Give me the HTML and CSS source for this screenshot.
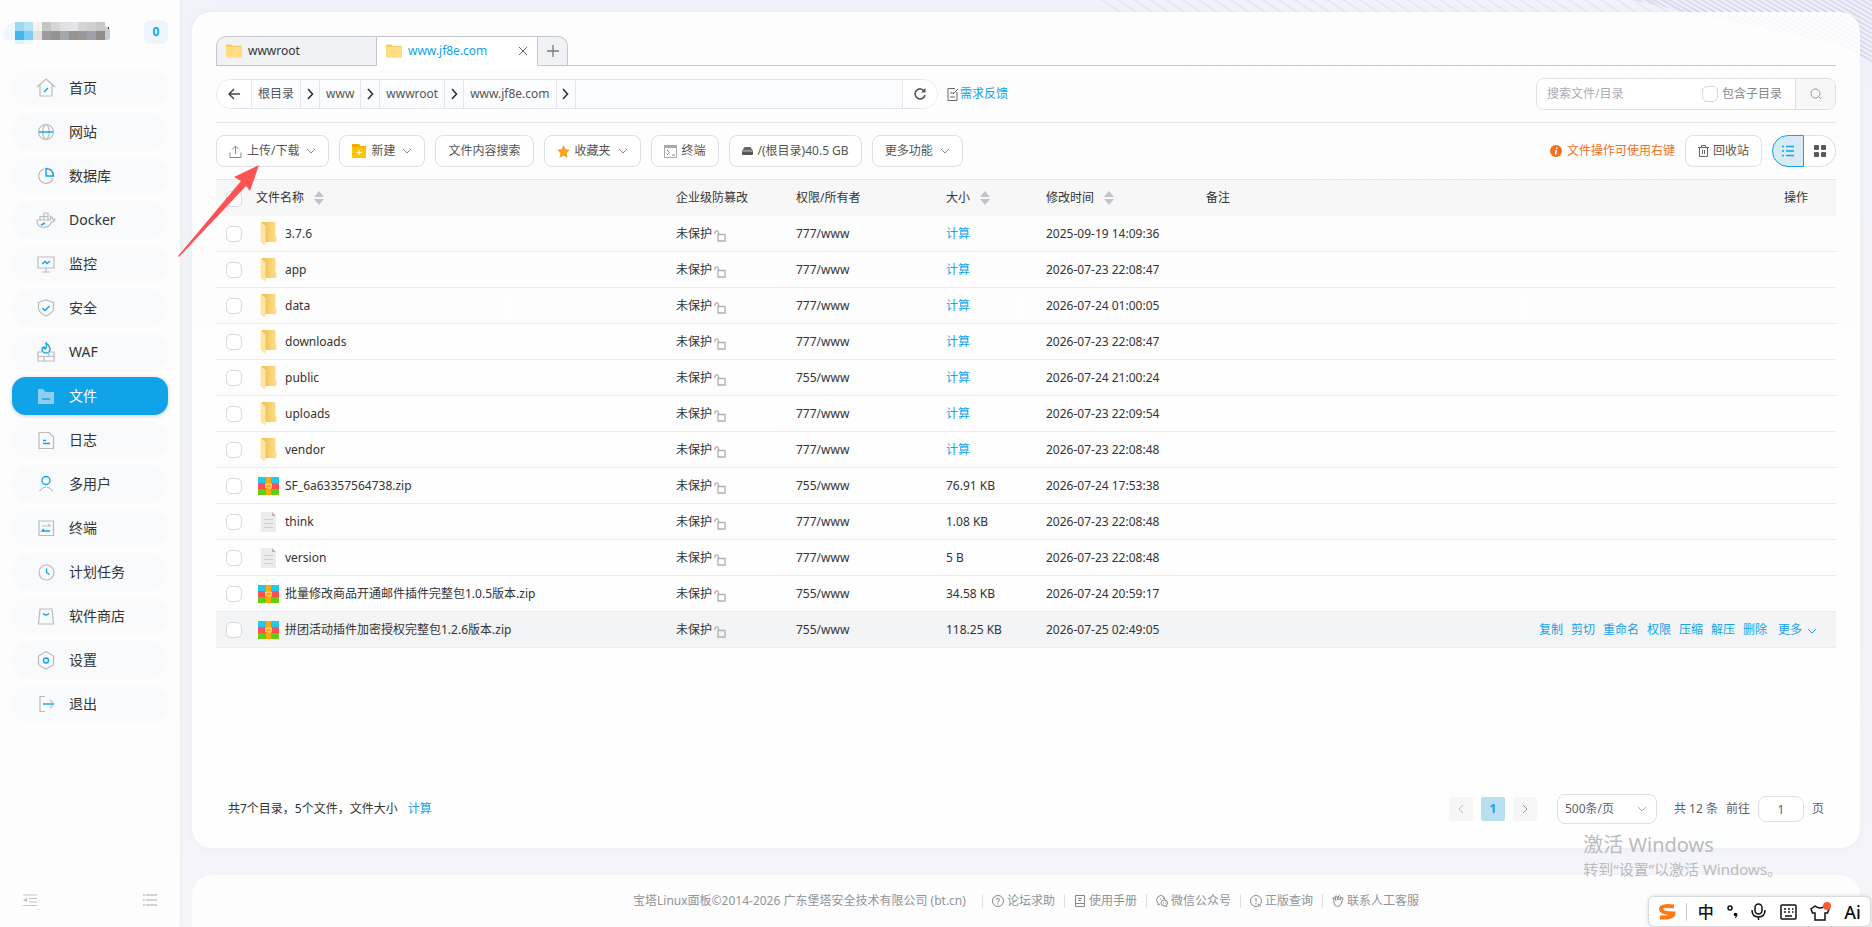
FILE: index.html
```html
<!DOCTYPE html>
<html lang="zh-CN">
<head>
    <meta charset="UTF-8">
    <meta name="viewport" content="width=device-width, initial-scale=1.0">
    <title>文件 - 宝塔Linux面板</title>
    <link rel="stylesheet" href="styles.css">
</head>
<body>
    <!-- 图标 -->
    <svg class="sprite" aria-hidden="true">
        <linearGradient id="gold" x1="0" x2="1" y1="0" y2="0">
            <stop offset="0" stop-color="#e9bd50"/><stop offset="1" stop-color="#ffe08a"/>
        </linearGradient>
        <symbol id="folder" viewBox="0 0 18 24">
            <path d="M2 0h14v14l1 1v5H5z" fill="url(#gold)"/>
            <path d="M1 0l5 4v20l-4-3-1-1z" fill="#ffe6a0"/>
        </symbol>
        <symbol id="folder-sm" viewBox="0 0 16 14">
            <path d="M0 1.5Q0 .5 1 .5h4l1.5 1.2H15q1 0 1 1V13H0z" fill="#f5c95c"/>
            <rect y="2.8" width="16" height="11" rx="1" fill="#ffdd80"/>
        </symbol>
        <symbol id="zip" viewBox="0 0 21 18">
            <rect width="21" height="18" rx="1" fill="#ff4f55"/>
            <path d="M0 1q0-1 1-1h19q1 0 1 1v5H0z" fill="#23c8f0"/>
            <path d="M0 12h21v5q0 1-1 1H1q-1 0-1-1z" fill="#5fd00a"/>
            <path d="M8 0h5v18H8z" fill="#ffa90a"/>
            <rect x="7.7" y="7.2" width="5.6" height="3.6" fill="none" stroke="#ffd27a" stroke-width="1.2"/>
        </symbol>
        <symbol id="doc" viewBox="0 0 15 20">
            <path d="M0 0h11l4 4v16H0z" fill="#ececec"/>
            <path d="M11 0l4 4h-4z" fill="#b5b5b5"/>
            <path d="M3 7.5h9M3 11.5h9M3 15.5h9" stroke="#cfcfcf"/>
        </symbol>
        <symbol id="lock" viewBox="0 0 12 12">
            <path d="M4.5 4.5h6.5v6.5h-7V4.5z M1 4V2.5Q1 1 2.8 1T4.5 2.5v2" fill="none" stroke="#b0b0b0" stroke-width="1.3"/>
        </symbol>
        <symbol id="down" viewBox="0 0 10 6">
            <path d="M1 1l4 4 4-4" fill="none" stroke="currentColor"/>
        </symbol>
        <symbol id="next" viewBox="0 0 7 12">
            <path d="M1 1l4.5 5L1 11" fill="none" stroke="currentColor" stroke-width="1.6"/>
        </symbol>
        <symbol id="sort" viewBox="0 0 10 14">
            <path d="M5 0l5 6H0zM5 14l5-6H0z" fill="#c0c4cc"/>
        </symbol>
    </svg>

    <!-- 背景斜线 -->
    <svg class="bg-lines" viewBox="0 0 800 200" aria-hidden="true">
        <defs>
            <pattern id="stripe" width="9" height="9" patternUnits="userSpaceOnUse" patternTransform="rotate(34)">
                <path d="M0 1h9" stroke="#c9cbe2" stroke-width="1"/>
            </pattern>
            <pattern id="stripe2" width="4" height="4" patternUnits="userSpaceOnUse" patternTransform="rotate(30)">
                <path d="M0 1h4" stroke="#c3bfe4" stroke-width="1"/>
            </pattern>
        </defs>
        <path d="M20 0h580l150 90-110 110H260z" fill="url(#stripe)" opacity=".5"/>
        <path d="M560 0h240v64l-30-18z" fill="url(#stripe2)"/>
    </svg>

    <div class="layout">
        <aside class="sidebar">
            <div class="brand">
                <svg width="108" height="26" viewBox="0 0 108 26" aria-hidden="true">
                    <path d="M0 16Q0 6 12 3h5v18H5q-5 0-5-5z" fill="#edf8fd"/>
                    <path d="M12 3h9v9h-9z" fill="#9bd8f5"/><path d="M21 3h9v9h-9z" fill="#b5e4f8"/>
                    <path d="M30 3h9v9h-9z" fill="#f5f1ef"/><path d="M39 3h9v9h-9z" fill="#c5c5c6"/>
                    <path d="M48 3h9v9h-9z" fill="#d6d6d8"/><path d="M57 3h9v9h-9z" fill="#dfe2e5"/>
                    <path d="M66 3h9v9h-9z" fill="#e5e5e7"/><path d="M75 3h9v9h-9z" fill="#d5d3d6"/>
                    <path d="M84 3h9v9h-9z" fill="#cfced1"/><path d="M93 3h9v9h-9z" fill="#c8c6c8"/>
                    <path d="M12 12h9v9h-9z" fill="#42b5eb"/><path d="M21 12h9v9h-9z" fill="#7bcdf2"/>
                    <path d="M30 12h9v9h-9z" fill="#e7e0dd"/><path d="M39 12h9v9h-9z" fill="#9c9a9b"/>
                    <path d="M48 12h9v9h-9z" fill="#959292"/><path d="M57 12h9v9h-9z" fill="#a3a8ad"/>
                    <path d="M66 12h9v9h-9z" fill="#989291"/><path d="M75 12h9v9h-9z" fill="#9b9899"/>
                    <path d="M84 12h9v9h-9z" fill="#9fa1a8"/><path d="M93 12h9v9h-9z" fill="#928d8a"/>
                    <path d="M102 7q5 1 5 5v7q0 2-5 2z" fill="#c9ccd3"/>
                    <path d="M12 21h9v4h-9z" fill="#ddf2fb"/><path d="M21 21h9v4h-9z" fill="#f0fafd"/>
                    <path d="M105 8h1v2h-1z" fill="#333"/>
                </svg>
                <span class="msg-count">0</span>
            </div>
            <nav class="menu">
                <a href="#"><svg viewBox="0 0 20 20"><path d="M1 9l9-8 9 8M4 7v11h12V7"/><path class="hl" d="M8 14l4-4"/></svg>首页</a>
                <a href="#"><svg viewBox="0 0 20 20"><circle cx="10" cy="10" r="7.5"/><ellipse cx="10" cy="10" rx="3.2" ry="7.5"/><path class="hl" d="M3 10h14"/></svg>网站</a>
                <a href="#"><svg viewBox="0 0 20 20"><path d="M8 3a7.3 7.3 0 1 0 9 9"/><path class="hl" d="M10 2.5V10h7.5Q17 3 10 2.5z"/></svg>数据库</a>
                <a href="#"><svg viewBox="0 0 20 20"><path d="M1 10h13q1-1 .5-4 2 1 2 3 1.500-.2 2.500.5Q18 12 15.500 12 13 17.500 8 17.500 1 17.500 1 10zM4 10V6.500h8V10M8 10V3h4v4M8 6v4"/><path class="hl" d="M5 15l4-2"/></svg>Docker</a>
                <a href="#"><svg viewBox="0 0 20 20"><path d="M2 3h16v11H2zM10 14v3.500M6 18h8"/><path class="hl" d="M6 10l3-2.500 2 2 3-2.500"/></svg>监控</a>
                <a href="#"><svg viewBox="0 0 20 20"><path d="M10 2l7.500 2.500v6Q17 15 10 18 3 15 2.500 10.500v-6z"/><path class="hl" d="M6.500 10l2.500 2.500 4.500-4.500"/></svg>安全</a>
                <a href="#"><svg viewBox="0 0 20 20"><path d="M6 10H2v9h16v-9h-4M2 14.500h16M8 14.500V19M13 11v3.500"/><path class="hl" d="M10 1q4 3 4 6.500Q13.500 11 10 11T6 7.500Q6.500 5 8 5q0 2 1.500 2Q11 4 10 1z"/></svg>WAF</a>
                <a href="#" class="active"><svg viewBox="0 0 20 20"><path class="fill" d="M2 3h5l2.500 3H18v12H2z"/><path class="hl" d="M6 13h8"/></svg>文件</a>
                <a href="#"><svg viewBox="0 0 20 20"><path d="M3 2.500h10L17.500 7v11.500H3z"/><path class="hl" d="M7 10.500h3M7 13.500h7"/></svg>日志</a>
                <a href="#"><svg viewBox="0 0 20 20"><path d="M3.500 17q6.500-8 13 0"/><circle class="hl" cx="10" cy="6.500" r="4"/></svg>多用户</a>
                <a href="#"><svg viewBox="0 0 20 20"><path d="M3 3h14.500v14.500H3zM6 8h8l-2-2"/><path class="hl" d="M14 13H6l2-2"/></svg>终端</a>
                <a href="#"><svg viewBox="0 0 20 20"><circle cx="10.500" cy="10.500" r="7.500"/><path class="hl" d="M10.500 6.500v4l3 2"/></svg>计划任务</a>
                <a href="#"><svg viewBox="0 0 20 20"><path d="M4 3h12l1.500 15h-15z"/><path class="hl" d="M7 7.500q3 3 6 0"/></svg>软件商店</a>
                <a href="#"><svg viewBox="0 0 20 20"><path d="M10 1.500l7.500 4.500v9L10 19l-7.500-4V6z"/><circle class="hl" cx="10" cy="10.500" r="2.500"/></svg>设置</a>
                <a href="#"><svg viewBox="0 0 20 20"><path d="M9 2.500H4v15h5M14 6l4 4-4 4"/><path class="hl" d="M7 10h10"/></svg>退出</a>
            </nav>
            <div class="sidebar-foot">
                <button aria-label="收起菜单"><svg width="14" height="12" viewBox="0 0 14 12"><path d="M0 1h14M6 4.500h8M6 8h8M0 11.500h14" stroke="#c4c4c4"/><path d="M4 3.500v5L0 6z" fill="#c4c4c4"/></svg></button>
                <button aria-label="菜单设置"><svg width="14" height="12" viewBox="0 0 14 12"><path d="M0 1h2M3 1h11M0 6h2M3 6h11M0 11h2M3 11h11" stroke="#c4c4c4" stroke-width="1.5"/></svg></button>
            </div>
        </aside>

        <div class="content">
            <main class="panel">
                <div class="tabs">
                    <button class="tab"><svg width="16" height="14"><use href="#folder-sm"/></svg>wwwroot</button>
                    <button class="tab current"><svg width="16" height="14"><use href="#folder-sm"/></svg>www.jf8e.com
                        <svg class="close" width="10" height="10" viewBox="0 0 10 10"><path d="M1 1l8 8M9 1L1 9" stroke="#666"/></svg></button>
                    <button class="tab-add" aria-label="新建标签"><svg width="12" height="12" viewBox="0 0 12 12"><path d="M6 0v12M0 6h12" stroke="#777" stroke-width="1.3"/></svg></button>
                </div>

                <div class="path-row">
                    <div class="path">
                        <button class="path-btn" aria-label="返回"><svg width="12" height="12" viewBox="0 0 12 12"><path d="M12 6H1M6 1L1 6l5 5" fill="none" stroke="#444" stroke-width="1.5"/></svg></button>
                        <a href="#">根目录</a><span class="sep"><svg width="7" height="12"><use href="#next"/></svg></span>
                        <a href="#">www</a><span class="sep"><svg width="7" height="12"><use href="#next"/></svg></span>
                        <a href="#">wwwroot</a><span class="sep"><svg width="7" height="12"><use href="#next"/></svg></span>
                        <a href="#">www.jf8e.com</a><span class="sep"><svg width="7" height="12"><use href="#next"/></svg></span>
                        <button class="path-btn refresh" aria-label="刷新"><svg width="12" height="12" viewBox="0 0 12 12"><path d="M10.500 3.500A5 5 0 1 0 11 7" fill="none" stroke="#555" stroke-width="1.6"/><path d="M11.500 0v4.500H7z" fill="#555"/></svg></button>
                    </div>
                    <a href="#" class="feedback"><svg width="12" height="13" viewBox="0 0 12 13"><path d="M8 .5H1v12h9V4M3 5h4M3 9h5M6 6l5-5" fill="none" stroke="#666"/></svg>需求反馈</a>
                    <form class="search">
                        <input type="text" placeholder="搜索文件/目录" aria-label="搜索文件/目录">
                        <label><input type="checkbox">包含子目录</label>
                        <button type="button" aria-label="搜索"><svg width="12" height="12" viewBox="0 0 12 12"><circle cx="5.5" cy="5.5" r="4.5" fill="none" stroke="#999"/><path d="M8.500 8.500l2.500 2.500" stroke="#999"/></svg></button>
                    </form>
                </div>

                <div class="toolbar">
                    <button class="btn"><svg width="13" height="13" viewBox="0 0 13 13"><path d="M6.500 9V1M3 4.500L6.500 1 10 4.500M1 7.500v5h11v-5" fill="none" stroke="#888"/></svg>上传/下载<svg class="arrow" width="10" height="6"><use href="#down"/></svg></button>
                    <button class="btn"><svg width="14" height="14" viewBox="0 0 14 14"><path d="M0 0h7l1 2h6v12H0z" fill="#ffc400"/><path d="M0 0h7l1 2h6v1H0z" fill="#f7a700"/><path d="M7 6v5M4.500 8.500h5" stroke="#fff"/></svg>新建<svg class="arrow" width="10" height="6"><use href="#down"/></svg></button>
                    <button class="btn">文件内容搜索</button>
                    <button class="btn"><svg width="13" height="13" viewBox="0 0 13 13"><path d="M6.500 0l2 4.200 4.500.6-3.300 3.200.8 4.700-4-2.200-4 2.200.8-4.700L0 4.800l4.500-.6z" fill="#f9a01f"/></svg>收藏夹<svg class="arrow" width="10" height="6"><use href="#down"/></svg></button>
                    <button class="btn"><svg width="13" height="13" viewBox="0 0 13 13"><path d="M.5.5h12v12H.5z" fill="none" stroke="#aaa"/><path d="M0 0h13v3H0z" fill="#aaa"/><path d="M3 5l2.500 2.500L3 10M8 10h3" fill="none" stroke="#888"/></svg>终端</button>
                    <button class="btn"><svg width="11" height="8" viewBox="0 0 11 8"><path d="M2.500 0h6L11 4H0z" fill="#666"/><rect y="4" width="11" height="4" rx="1" fill="#555"/><path d="M1 4h9" stroke="#ddd" stroke-width=".8"/></svg>/(根目录)40.5 GB</button>
                    <button class="btn">更多功能<svg class="arrow" width="10" height="6"><use href="#down"/></svg></button>

                    <span class="tip"><svg width="12" height="12" viewBox="0 0 12 12"><circle cx="6" cy="6" r="6" fill="#f4701c"/><path d="M6.800 2.500l-.3 1.500M6.300 5l-.8 4.500" stroke="#fff" stroke-width="1.5"/></svg>文件操作可使用右键</span>
                    <button class="btn recycle"><svg width="11" height="12" viewBox="0 0 11 12"><path d="M0 2.500h11M3.500 2.500v-2h4v2M1.500 2.500v9h8v-9M4.500 5v4M6.500 5v4" fill="none" stroke="#666"/></svg>回收站</button>
                    <div class="view-switch">
                        <button class="on" aria-label="列表"><svg width="12" height="12" viewBox="0 0 12 12"><path d="M0 1.500h2M0 6h2M0 10.500h2M4 1.500h8M4 6h8M4 10.500h8" stroke="#10a3e8" stroke-width="1.5"/></svg></button>
                        <button aria-label="图标"><svg width="12" height="12" viewBox="0 0 12 12" fill="#5a5c60"><rect width="5" height="5" rx="1"/><rect x="7" width="5" height="5" rx="1"/><rect y="7" width="5" height="5" rx="1"/><rect x="7" y="7" width="5" height="5" rx="1"/></svg></button>
                    </div>
                </div>

                <table class="files">
                    <thead>
                        <tr>
                            <th class="c-check"><input type="checkbox" aria-label="全选"></th>
                            <th class="c-name">文件名称<svg class="sort" width="10" height="14"><use href="#sort"/></svg></th>
                            <th class="c-guard">企业级防篡改</th>
                            <th class="c-perm">权限/所有者</th>
                            <th class="c-size">大小<svg class="sort" width="10" height="14"><use href="#sort"/></svg></th>
                            <th class="c-time">修改时间<svg class="sort" width="10" height="14"><use href="#sort"/></svg></th>
                            <th>备注</th>
                            <th class="c-ops">操作</th>
                        </tr>
                    </thead>
                    <tbody>
                        <tr><td><input type="checkbox" aria-label="3.7.6"></td><td><div class="name"><svg class="ico-folder"><use href="#folder"/></svg>3.7.6</div></td><td>未保护<svg class="lock"><use href="#lock"/></svg></td><td>777/www</td><td><a href="#">计算</a></td><td>2025-09-19 14:09:36</td><td></td><td></td></tr>
                        <tr><td><input type="checkbox" aria-label="app"></td><td><div class="name"><svg class="ico-folder"><use href="#folder"/></svg>app</div></td><td>未保护<svg class="lock"><use href="#lock"/></svg></td><td>777/www</td><td><a href="#">计算</a></td><td>2026-07-23 22:08:47</td><td></td><td></td></tr>
                        <tr><td><input type="checkbox" aria-label="data"></td><td><div class="name"><svg class="ico-folder"><use href="#folder"/></svg>data</div></td><td>未保护<svg class="lock"><use href="#lock"/></svg></td><td>777/www</td><td><a href="#">计算</a></td><td>2026-07-24 01:00:05</td><td></td><td></td></tr>
                        <tr><td><input type="checkbox" aria-label="downloads"></td><td><div class="name"><svg class="ico-folder"><use href="#folder"/></svg>downloads</div></td><td>未保护<svg class="lock"><use href="#lock"/></svg></td><td>777/www</td><td><a href="#">计算</a></td><td>2026-07-23 22:08:47</td><td></td><td></td></tr>
                        <tr><td><input type="checkbox" aria-label="public"></td><td><div class="name"><svg class="ico-folder"><use href="#folder"/></svg>public</div></td><td>未保护<svg class="lock"><use href="#lock"/></svg></td><td>755/www</td><td><a href="#">计算</a></td><td>2026-07-24 21:00:24</td><td></td><td></td></tr>
                        <tr><td><input type="checkbox" aria-label="uploads"></td><td><div class="name"><svg class="ico-folder"><use href="#folder"/></svg>uploads</div></td><td>未保护<svg class="lock"><use href="#lock"/></svg></td><td>777/www</td><td><a href="#">计算</a></td><td>2026-07-23 22:09:54</td><td></td><td></td></tr>
                        <tr><td><input type="checkbox" aria-label="vendor"></td><td><div class="name"><svg class="ico-folder"><use href="#folder"/></svg>vendor</div></td><td>未保护<svg class="lock"><use href="#lock"/></svg></td><td>777/www</td><td><a href="#">计算</a></td><td>2026-07-23 22:08:48</td><td></td><td></td></tr>
                        <tr><td><input type="checkbox" aria-label="SF_6a63357564738.zip"></td><td><div class="name"><svg class="ico-zip"><use href="#zip"/></svg>SF_6a63357564738.zip</div></td><td>未保护<svg class="lock"><use href="#lock"/></svg></td><td>755/www</td><td>76.91 KB</td><td>2026-07-24 17:53:38</td><td></td><td></td></tr>
                        <tr><td><input type="checkbox" aria-label="think"></td><td><div class="name"><svg class="ico-doc"><use href="#doc"/></svg>think</div></td><td>未保护<svg class="lock"><use href="#lock"/></svg></td><td>777/www</td><td>1.08 KB</td><td>2026-07-23 22:08:48</td><td></td><td></td></tr>
                        <tr><td><input type="checkbox" aria-label="version"></td><td><div class="name"><svg class="ico-doc"><use href="#doc"/></svg>version</div></td><td>未保护<svg class="lock"><use href="#lock"/></svg></td><td>777/www</td><td>5 B</td><td>2026-07-23 22:08:48</td><td></td><td></td></tr>
                        <tr><td><input type="checkbox" aria-label="批量修改商品开通邮件插件完整包1.0.5版本.zip"></td><td><div class="name"><svg class="ico-zip"><use href="#zip"/></svg>批量修改商品开通邮件插件完整包1.0.5版本.zip</div></td><td>未保护<svg class="lock"><use href="#lock"/></svg></td><td>755/www</td><td>34.58 KB</td><td>2026-07-24 20:59:17</td><td></td><td></td></tr>
                        <tr class="hover"><td><input type="checkbox" aria-label="拼团活动插件加密授权完整包1.2.6版本.zip"></td><td><div class="name"><svg class="ico-zip"><use href="#zip"/></svg>拼团活动插件加密授权完整包1.2.6版本.zip</div></td><td>未保护<svg class="lock"><use href="#lock"/></svg></td><td>755/www</td><td>118.25 KB</td><td>2026-07-25 02:49:05</td><td></td>
                            <td><div class="ops"><a href="#">复制</a><a href="#">剪切</a><a href="#">重命名</a><a href="#">权限</a><a href="#">压缩</a><a href="#">解压</a><a href="#">删除</a><a href="#" class="more">更多<svg width="10" height="6"><use href="#down"/></svg></a></div></td></tr>
                    </tbody>
                </table>

                <div class="table-foot">
                    <span>共7个目录，5个文件，文件大小</span><a href="#">计算</a>
                    <div class="pager">
                        <button class="page" aria-label="上一页"><svg width="6" height="10" viewBox="0 0 6 10"><path d="M5 1L1 5l4 4" fill="none" stroke="#bbb"/></svg></button>
                        <button class="page now">1</button>
                        <button class="page" aria-label="下一页"><svg width="6" height="10" viewBox="0 0 6 10"><path d="M1 1l4 4-4 4" fill="none" stroke="#999"/></svg></button>
                        <div class="page-size">
                            <select aria-label="每页条数"><option>500条/页</option></select>
                            <svg width="10" height="6"><use href="#down"/></svg>
                        </div>
                        <span>共 12 条</span>
                        <label>前往<input type="text" value="1"></label><span>页</span>
                    </div>
                </div>
            </main>

            <footer class="footer">
                <span class="copy">宝塔Linux面板©2014-2026 广东堡塔安全技术有限公司 (bt.cn)</span>
                <a href="#"><svg viewBox="0 0 12 12"><circle cx="6" cy="6" r="5.500"/><path d="M4.500 5q0-1.500 1.500-1.500T7.500 5Q7.500 5.500 6 6.500V7.500M6 8.500v1"/></svg>论坛求助</a>
                <a href="#"><svg viewBox="0 0 12 12"><path d="M1.500.5h9v11h-9zM4 3.500h4M4 5.500h3M1.500 8.500h9"/></svg>使用手册</a>
                <a href="#"><svg viewBox="0 0 12 12"><path d="M9 4.500Q8.500.5 5 .5T.5 4.500Q.5 6.500 2 8v2l2-1M4 4h1M7 3.500h1"/><path d="M5 8q0-3 3.200-3t3.300 3q0 1-.8 2v1.500L9 11Q5 11 5 8zM7 8h1M9 8h1"/></svg>微信公众号</a>
                <a href="#"><svg viewBox="0 0 12 12"><circle cx="6" cy="6" r="5.500"/><path d="M6 3v4M6 8v1.500M8 9l3 2.500"/></svg>正版查询</a>
                <a href="#"><svg viewBox="0 0 12 12"><path d="M2 6L.8 3q1-1 1.700 0L4 5.500 3 1.500Q4 .3 5 1.500L6 5l.5-4Q8 0 8.500 1.500L8 5l1.500-2.500Q11 2 11 3.500L9.500 8q-1 3.500-4 3.500T2 8z"/></svg>联系人工客服</a>
            </footer>
        </div>
    </div>

    <!-- 指向上传按钮的箭头 -->
    <svg class="pointer" viewBox="0 0 82 92" aria-hidden="true"><path d="M81 0L72 26l-4-5L1 92 0 91 63 16l-7-4z" fill="#fd5352"/></svg>

    <div class="activate">
        <p class="big">激活 Windows</p>
        <p>转到“设置”以激活 Windows。</p>
    </div>

    <div class="ime">
        <svg width="18" height="16" viewBox="0 0 18 16"><path d="M16 2.500Q3 1 3 5T15.500 9.500q0 4.500-13.500 4" fill="none" stroke="#ff7a14" stroke-width="4"/></svg>
        <i></i>
        <span class="lang">中</span>
        <svg width="11" height="14" viewBox="0 0 11 14"><circle cx="3" cy="3" r="2" fill="none" stroke="#111" stroke-width="1.5"/><circle cx="8.5" cy="9.5" r="1.8"/><path class="solid" d="M10.300 9.500q0 3-3 4 1.500-1.500 1.500-3z"/></svg>
        <svg width="15" height="17" viewBox="0 0 15 17"><rect x="4" y="1" width="7" height="10" rx="3.5"/><path class="line" d="M1 7q0 7 6.500 7T14 7M7.500 14v3"/></svg>
        <svg width="17" height="16" viewBox="0 0 17 16"><rect x="1" y="1" width="15" height="14" rx="1"/><path class="line" d="M4 5h2M8 5h2M12 5h1.500M4 8h2M8 8h2M12 8h1.500M5 12h7"/></svg>
        <svg width="21" height="19" viewBox="0 0 21 19"><path class="line" d="M5 4L1 7l1.500 4H5v7h10v-7h2.500L19 7l-4-3q-5 4-10 0z"/><circle cx="17" cy="4" r="4" class="dot"/></svg>
        <span class="ai">Ai</span>
    </div>
</body>
</html>
```

FILE: styles.css
```css
* {
    box-sizing: border-box;
}
body {
    margin: 0;
    background: linear-gradient(180deg, #f0f3f9, #f4f4f9);
    font-family: "Noto Sans", "Noto Sans CJK SC", sans-serif;
    font-size: 12px;
    line-height: 20px;
    color: #333;
    height: 100vh;
    overflow: hidden;
}
a {
    color: #10a3e8;
    text-decoration: none;
}
button, input, select {
    font: inherit;
    color: inherit;
}
button {
    display: flex;
    align-items: center;
    justify-content: center;
    padding: 0;
    border: none;
    background: none;
    cursor: pointer;
}
svg {
    flex: none;
}
.sprite {
    position: absolute;
    width: 0;
    height: 0;
}
.bg-lines {
    position: absolute;
    top: 0;
    right: 0;
    width: 800px;
    height: 200px;
}
.layout {
    display: flex;
    height: 100vh;
}

/* 左侧菜单 */
.sidebar {
    display: flex;
    flex-direction: column;
    flex: none;
    width: 180px;
    padding: 0 12px;
    background: #fdfdfd;
    box-shadow: 0 0 6px rgba(0, 0, 50, 0.05);
}
.brand {
    display: flex;
    justify-content: space-between;
    align-items: center;
    height: 64px;
    margin-left: -9px;
}
.msg-count {
    width: 24px;
    height: 24px;
    line-height: 24px;
    border-radius: 6px;
    background: #edf5fc;
    color: #10a3e8;
    font-weight: bold;
    text-align: center;
}
.menu {
    display: flex;
    flex-direction: column;
    gap: 6px;
    padding-top: 5px;
}
.menu a {
    display: flex;
    align-items: center;
    gap: 13px;
    height: 38px;
    padding-left: 24px;
    border-radius: 19px;
    background: #f9fafc;
    color: #333;
    font-size: 14px;
}
.menu svg {
    width: 20px;
    height: 20px;
    fill: none;
    stroke: #bbb;
    stroke-width: 1.2;
}
.menu .hl {
    stroke: #10a3e8;
    stroke-width: 1.4;
}
.menu .active {
    background: #10a3e8;
    color: #fff;
    border-radius: 14px;
    box-shadow: 0 1px 4px rgba(0, 0, 0, 0.2);
}
.menu .fill {
    fill: #8ecff0;
    stroke: none;
}
.sidebar-foot {
    display: flex;
    justify-content: space-between;
    margin-top: auto;
    padding: 0 11px 21px;
}

/* 主面板 */
.content {
    position: relative;
    display: flex;
    flex-direction: column;
    gap: 27px;
    flex: 1;
    min-width: 0;
    padding: 12px 12px 0;
}
.panel {
    display: flex;
    flex-direction: column;
    flex: 1;
    padding: 24px;
    border-radius: 20px;
    background: rgba(255, 255, 255, 0.84);
    box-shadow: 0 0 8px rgba(0, 0, 50, 0.04);
}
.tabs {
    display: flex;
    height: 30px;
    border-bottom: 1px solid #c3c5cd;
}
.tab, .tab-add {
    height: 30px;
    border: 1px solid #c3c5cd;
    background: #f1f2f6;
}
.tab {
    justify-content: flex-start;
    gap: 6px;
    width: 161px;
    padding: 0 9px;
    border-radius: 10px 0 0 0;
}
.tab.current {
    border-left: none;
    border-bottom-color: #fff;
    border-radius: 0;
    background: #fff;
    color: #10a3e8;
}
.close {
    margin-left: auto;
}
.tab-add {
    width: 30px;
    border-left: none;
    border-radius: 0 10px 0 0;
}
.path-row {
    display: flex;
    align-items: center;
    height: 57px;
    border-bottom: 1px solid #e5e6ed;
}
.path {
    display: flex;
    width: 722px;
    height: 30px;
    border: 1px solid #e5e6ed;
    border-radius: 15px;
    background: #fbfcff;
    overflow: hidden;
}
.path > * {
    display: flex;
    align-items: center;
    border-right: 1px solid #e5e6ed;
}
.path a {
    padding: 0 6px;
    color: #555;
}
.sep {
    justify-content: center;
    width: 19px;
    color: #333;
}
.path-btn {
    width: 35px;
    background: #fff;
}
.refresh {
    margin-left: auto;
    border-left: 1px solid #e5e6ed;
    border-right: none;
}
.feedback {
    display: flex;
    align-items: center;
    gap: 1px;
    margin-left: 9px;
}
.search {
    display: flex;
    width: 300px;
    height: 32px;
    margin-left: auto;
    border: 1px solid #dcdfe6;
    border-radius: 8px;
    background: #fff;
    overflow: hidden;
}
.search input[type="text"] {
    flex: 1;
    min-width: 0;
    padding: 0 10px;
    border: none;
    outline: none;
}
.search ::placeholder {
    color: #a8abb2;
}
.search label {
    display: flex;
    align-items: center;
    gap: 4px;
    padding-right: 13px;
    color: #888;
}
.search button {
    width: 40px;
    border-left: 1px solid #dcdfe6;
    background: #f7f7f8;
}
input[type="checkbox"] {
    appearance: none;
    width: 16px;
    height: 16px;
    margin: 0;
    border: 1px solid #d5d8e0;
    border-radius: 5px;
    background: #fff;
    vertical-align: middle;
}

/* 工具栏 */
.toolbar {
    display: flex;
    align-items: center;
    gap: 10px;
    height: 56px;
}
.btn {
    gap: 5px;
    height: 32px;
    padding: 0 12px;
    border: 1px solid #dcdfe6;
    border-radius: 8px;
    background: #fff;
    color: #555;
    white-space: nowrap;
}
.recycle {
    gap: 4px;
}
.arrow {
    margin-left: 2px;
    color: #888;
}
.tip {
    display: flex;
    align-items: center;
    gap: 5px;
    margin-left: auto;
    color: #f4701c;
}
.view-switch {
    display: flex;
}
.view-switch button {
    width: 32px;
    height: 32px;
    border: 1px solid #dcdfe6;
    border-left: none;
    border-radius: 0 16px 16px 0;
    background: #fff;
}
.view-switch .on {
    border: 1px solid #10a3e8;
    border-radius: 16px 0 0 16px;
    background: #d8ebf5;
}

/* 文件列表 */
.files {
    width: 100%;
    table-layout: fixed;
    border-collapse: separate;
    border-spacing: 0;
}
.files th, .files td {
    height: 36px;
    padding: 0 10px;
    border-bottom: 1px solid #ebebee;
    text-align: left;
    white-space: nowrap;
    font-weight: normal;
}
.files th {
    height: 37px;
    border-top: 1px solid #e5e6ea;
    border-bottom: none;
    background: #f7f7f7;
}
.files .c-check { width: 30px; }
.files .c-name { width: 420px; }
.files .c-guard { width: 120px; }
.files .c-perm { width: 150px; }
.files .c-size { width: 100px; }
.files .c-time { width: 160px; }
.files .c-ops {
    width: 320px;
    padding-right: 28px;
    text-align: right;
}
.files .hover td {
    background: #f3f4f6;
}
.sort {
    margin-left: 10px;
    vertical-align: -3px;
}
.name {
    display: flex;
    align-items: center;
    gap: 4px;
}
.name svg {
    width: 25px;
}
.ico-folder {
    height: 24px;
}
.ico-zip {
    height: 18px;
}
.ico-doc {
    height: 20px;
}
.lock {
    width: 12px;
    height: 12px;
    margin-left: 2px;
    vertical-align: -4px;
}
.ops {
    display: flex;
    justify-content: flex-end;
    gap: 8px;
    padding-right: 9px;
}
.ops .more {
    margin-left: 3px;
}
.more svg {
    margin-left: 5px;
}

/* 底部统计与分页 */
.table-foot {
    display: flex;
    align-items: center;
    gap: 10px;
    margin-top: auto;
    padding: 0 12px;
}
.pager {
    display: flex;
    align-items: center;
    gap: 8px;
    margin-left: auto;
    color: #606266;
}
.page {
    width: 24px;
    height: 24px;
    border-radius: 2px;
    background: #f6f6f7;
}
.page.now {
    background: #b8def0;
    color: #10a3e8;
    font-weight: bold;
}
.page-size {
    display: flex;
    align-items: center;
    width: 100px;
    height: 30px;
    margin: 0 9px 0 12px;
    padding-right: 9px;
    border: 1px solid #dcdfe6;
    border-radius: 8px;
    background: #fff;
    color: #aaa;
}
.page-size select {
    flex: 1;
    appearance: none;
    padding: 0 7px;
    border: none;
    background: none;
    color: #606266;
}
.pager label {
    display: flex;
    align-items: center;
    gap: 8px;
}
.pager input {
    width: 46px;
    height: 26px;
    border: 1px solid #dcdfe6;
    border-radius: 8px;
    background: #fff;
    text-align: center;
}

.footer {
    display: flex;
    justify-content: center;
    align-items: center;
    height: 52px;
    border-radius: 20px 20px 0 0;
    background: #fdfdfd;
    color: #909399;
}
.footer .copy {
    padding-right: 16px;
}
.footer a {
    display: flex;
    align-items: center;
    gap: 3px;
    height: 14px;
    padding: 0 9px;
    border-left: 1px solid #dcdfe6;
    color: #909399;
}
.footer a:last-child {
    padding-right: 0;
}
.footer svg {
    width: 12px;
    height: 12px;
    fill: none;
    stroke: #888;
}

/* 浮在页面上的内容 */
.pointer {
    position: absolute;
    left: 178px;
    top: 165px;
    width: 82px;
    height: 92px;
}
.activate {
    position: absolute;
    right: 90px;
    bottom: 48px;
    font-size: 15px;
    line-height: 20px;
    color: #b9babd;
}
.activate p {
    margin: 0;
}
.activate .big {
    font-size: 20px;
    line-height: 28px;
}
.ime {
    position: absolute;
    right: 1px;
    bottom: 0;
    display: flex;
    align-items: center;
    justify-content: space-between;
    width: 223px;
    height: 31px;
    padding: 0 9px;
    border: 1px solid #d9dade;
    border-radius: 6px;
    background: #fff;
    box-shadow: 0 0 4px rgba(0, 0, 0, 0.15);
    color: #111;
}
.ime i {
    width: 1px;
    height: 18px;
    margin: 0 -3px;
    background: #ccc;
}
.ime rect, .ime .line {
    fill: none;
    stroke: #111;
    stroke-width: 1.5;
}
.ime .solid {
    fill: #111;
}
.ime .dot {
    fill: #ff5a36;
}
.lang {
    font-size: 16px;
    font-weight: 500;
}
.ai {
    font-size: 18px;
    font-weight: 500;
}
```
